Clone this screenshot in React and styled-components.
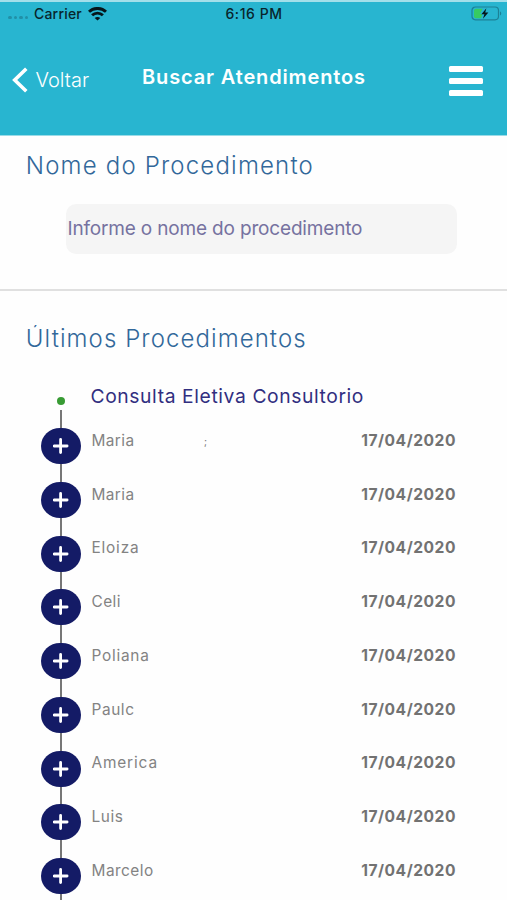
import React from 'react';
import styled, { createGlobalStyle } from 'styled-components';

const GlobalStyle = createGlobalStyle`
  *, *::before, *::after { box-sizing: border-box; }
  body {
    margin: 0;
    background: #fefefe;
    font-family: Inter, 'Liberation Sans', sans-serif;
    overflow: hidden;
  }
`;

const Screen = styled.main`
  width: 507px;
  height: 900px;
  overflow: hidden;
  display: flex;
  flex-direction: column;
  background: #fefefe;
`;

const Header = styled.header`
  flex: none;
  height: 136px;
  background: #28b5d0;
  border-top: 2px solid #a3dfea;
  border-bottom: 1px solid #9adbe7;
`;

const StatusBar = styled.div`
  height: 24px;
  display: grid;
  grid-template-columns: 1fr auto 1fr;
  align-items: center;
  padding: 0 7px 0 8px;
  color: #08252c;
  font-size: 14px;
  line-height: 22px;
  font-weight: 500;
`;

const StatusGroup = styled.div`
  display: flex;
  align-items: center;
  justify-content: ${(p) => (p.$end ? 'flex-end' : 'flex-start')};
  ${(p) => p.$end && 'margin: -2px -2px 0 0;'}
`;

const Signal = styled.span`
  display: flex;
  gap: 2px;
  width: 26px;
  padding-top: 7px;
`;

const SignalDot = styled.i`
  width: 3.5px;
  height: 3.5px;
  border-radius: 50%;
  background: #2190a7;
`;

const Carrier = styled.span`
  width: 54px;
  letter-spacing: 0.2px;
`;

const Clock = styled.time`
  letter-spacing: 0.55px;
`;

const NavBar = styled.nav`
  height: 108px;
  display: grid;
  grid-template-columns: 142px 1fr auto;
  align-items: start;
  padding: 0 24px 0 0;
  color: #fdffff;
`;

const BackButton = styled.button`
  display: flex;
  align-items: center;
  gap: 7.5px;
  margin-top: 40px;
  padding: 0 0 0 12px;
  border: 0;
  background: none;
  color: inherit;
  font: 300 20px/28px Inter, sans-serif;
`;

const PageTitle = styled.h1`
  margin: 38px 0 0;
  font-size: 20px;
  line-height: 27px;
  font-weight: 600;
  letter-spacing: 0.86px;
  white-space: nowrap;
`;

const MenuButton = styled.button`
  display: flex;
  flex-direction: column;
  gap: 6px;
  width: 34px;
  margin-top: 40px;
  padding: 0;
  border: 0;
  background: none;
`;

const MenuBar = styled.span`
  height: 6px;
  border-radius: 1.5px;
  background: #fff;
`;

const SearchSection = styled.section`
  flex: none;
  height: 155px;
  border-bottom: 2px solid #e0e0e0;
  padding-top: 14px;
`;

const SectionTitle = styled.h2`
  margin: 0 0 0 ${(p) => p.$inset}px;
  font-size: 24px;
  line-height: 32px;
  font-weight: 300;
  letter-spacing: ${(p) => p.$tracking}px;
  color: #32689a;
  white-space: nowrap;
  ${(p) => p.$clipTop && `clip-path: inset(${p.$clipTop}px 0 0 0);`}
`;

const SearchField = styled.input`
  display: block;
  width: 391px;
  height: 50px;
  margin: 22px 0 0 66px;
  padding: 0 1.5px 2px;
  border: 0;
  border-radius: 10px;
  background: #f5f5f5;
  font: 400 19px/48px Inter, sans-serif;
  letter-spacing: -0.17px;
  &::placeholder { color: #7672a0; opacity: 1; }
`;

const History = styled.section`
  flex: none;
  padding-top: 32px;
`;

const GroupHeader = styled.div`
  display: grid;
  grid-template-columns: 40px 1fr;
  margin: 27px 0 0 41px;
  height: 46px;
`;

const GroupMarker = styled.span`
  display: flex;
  flex-direction: column;
  align-items: center;
  padding-top: 15px;
  &::before {
    content: '';
    flex: none;
    width: 8px;
    height: 8px;
    border-radius: 50%;
    background: #389b34;
  }
  &::after {
    content: '';
    width: 2px;
    flex: 1;
    margin-top: 5px;
    background: #777;
  }
`;

const GroupTitle = styled.h3`
  margin: 0 0 0 9.5px;
  font-size: 19.3px;
  line-height: 28px;
  font-weight: 400;
  letter-spacing: 0.6px;
  color: #312e80;
  white-space: nowrap;
`;

const Rows = styled.ul`
  list-style: none;
  margin: 0;
  padding: 0 51px 0 41px;
`;

const Row = styled.li`
  display: grid;
  grid-template-columns: 40px 1fr auto;
  height: 53.75px;
  font-size: 15.4px;
  line-height: 24px;
`;

const Track = styled.div`
  display: flex;
  flex-direction: column;
  align-items: center;
  &::after {
    content: '';
    width: 2px;
    flex: 1;
    background: #777;
  }
`;

const ExpandButton = styled.button`
  flex: none;
  display: grid;
  place-items: center;
  width: 40px;
  height: 36px;
  padding: 0;
  border: 0;
  border-radius: 19px / 18px;
  background: #141b66;
`;

const Name = styled.span`
  display: flex;
  padding: 0.8px 0 0 10.5px;
  color: #838383;
  letter-spacing: ${(p) => p.$tracking}px;
`;

const PartialGlyph = styled.span`
  margin-left: 69.5px;
  font-size: 10px;
  color: #777;
`;

const DateText = styled.time`
  padding-top: 0.8px;
  color: #727272;
  font-size: 15.6px;
  font-weight: 700;
  letter-spacing: 0.52px;
`;

const visits = [
  { name: 'Maria', tracking: 0.4, partial: ';' },
  { name: 'Maria', tracking: 0.4 },
  { name: 'Eloiza', tracking: 0.8 },
  { name: 'Celi', tracking: 0.4 },
  { name: 'Poliana', tracking: 0.75 },
  { name: 'Paulc', tracking: 0.6 },
  { name: 'America', tracking: 0.85 },
  { name: 'Luis', tracking: 0.6 },
  { name: 'Marcelo', tracking: 0.48 },
];

const WifiIcon = () => (
  <svg width="19" height="14" viewBox="0 0 19 14" fill="none" stroke="#06161a" strokeWidth="2.9">
    <path d="M1 4.8C5.6.3 13.4.3 18 4.8" />
    <path d="M4.1 8.3c3-2.9 7.8-2.9 10.8 0" />
    <path d="M9.5 13.6 6.7 11c1.5-1.5 4.1-1.5 5.6 0Z" fill="#06161a" stroke="none" />
  </svg>
);

const BatteryIcon = () => (
  <svg width="31" height="15" viewBox="0 0 31 15">
    <rect x="1" y="1" width="26.5" height="12.8" rx="3.5" fill="none" stroke="#1c8196" strokeWidth="1.2" />
    <path d="M29 5.2c1.7.8 1.7 3.6 0 4.4Z" fill="#1c8196" />
    <path d="M5 2.8h6.500L9 8h2l-.7 4.200H5A2 2 0 0 1 3 10.200V4.800a2 2 0 0 1 2-2Z" fill="#37cb62" />
    <path d="M15.4 2.3 10.4 8.2h3l-1.5 4.600 5.500-6.200h-3.200Z" fill="#05161a" />
  </svg>
);

const BackIcon = () => (
  <svg width="16" height="26" viewBox="0 0 16 26" fill="none" stroke="#fff" strokeWidth="3.6">
    <path d="M14.3 1.8 2.7 13l11.6 11.2" />
  </svg>
);

const PlusIcon = () => (
  <svg width="16" height="16" viewBox="0 0 16 16" stroke="#fff" strokeWidth="2.8" strokeLinecap="round">
    <path d="M7.6 1.5v13M1.1 8h13" />
  </svg>
);

export default function App() {
  return (
    <>
      <GlobalStyle />
      <Screen>
        <Header>
          <StatusBar>
            <StatusGroup>
              <Signal>
                <SignalDot /><SignalDot /><SignalDot /><SignalDot />
              </Signal>
              <Carrier>Carrier</Carrier>
              <WifiIcon />
            </StatusGroup>
            <Clock>6:16 PM</Clock>
            <StatusGroup $end>
              <BatteryIcon />
            </StatusGroup>
          </StatusBar>
          <NavBar>
            <BackButton><BackIcon />Voltar</BackButton>
            <PageTitle>Buscar Atendimentos</PageTitle>
            <MenuButton aria-label="Menu">
              <MenuBar /><MenuBar /><MenuBar />
            </MenuButton>
          </NavBar>
        </Header>
        <SearchSection>
          <SectionTitle $inset={25.8} $tracking={1.18}>Nome do Procedimento</SectionTitle>
          <SearchField placeholder="Informe o nome do procedimento" />
        </SearchSection>
        <History>
          <SectionTitle $inset={25.8} $tracking={1.08} $clipTop={2}>Últimos Procedimentos</SectionTitle>
          <GroupHeader>
            <GroupMarker />
            <GroupTitle>Consulta Eletiva Consultorio</GroupTitle>
          </GroupHeader>
          <Rows>
            {visits.map((visit, i) => (
              <Row key={i}>
                <Track>
                  <ExpandButton aria-label="Expandir"><PlusIcon /></ExpandButton>
                </Track>
                <Name $tracking={visit.tracking}>
                  {visit.name}
                  {visit.partial && <PartialGlyph>{visit.partial}</PartialGlyph>}
                </Name>
                <DateText>17/04/2020</DateText>
              </Row>
            ))}
          </Rows>
        </History>
      </Screen>
    </>
  );
}
